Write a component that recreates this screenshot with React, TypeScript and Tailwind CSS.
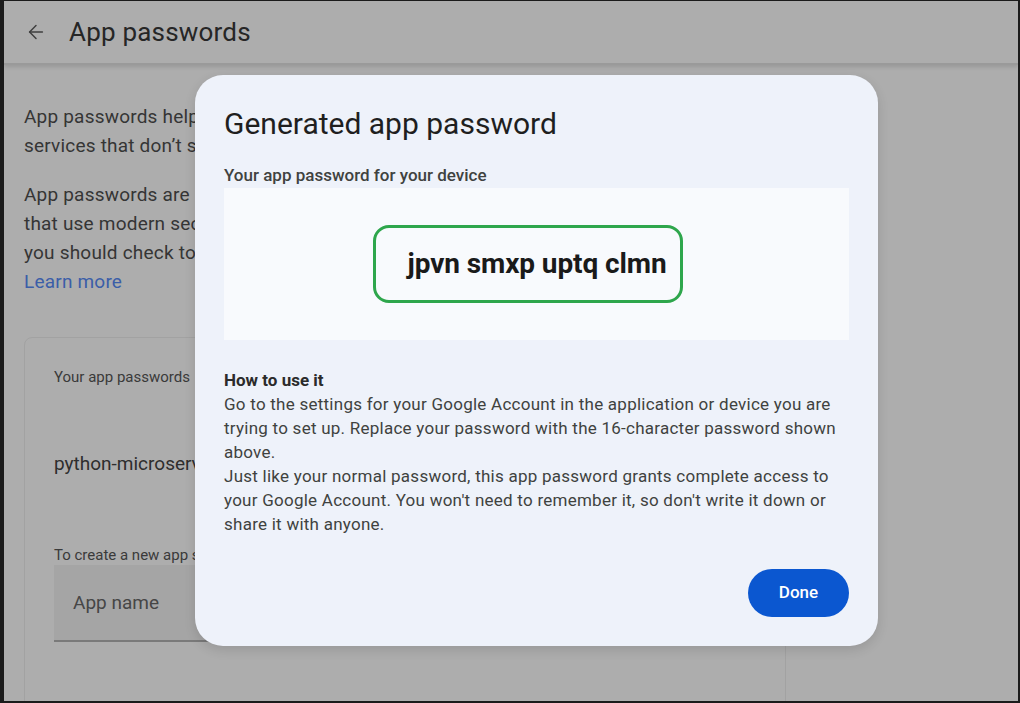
import { ArrowLeft } from "lucide-react";

const font = { fontFamily: "Roboto, 'Noto Sans', Arial, sans-serif" };

export default function App() {
  return (
    <div className="h-[703px] w-[1020px] bg-[#1b1b1b] pb-[2px] pl-[4px] pr-[2px] pt-[1px]" style={font}>
      <div className="relative h-full w-full overflow-hidden bg-[#adadad]">
        {/* header */}
        <header className="flex h-[64px] items-center gap-[22px] border-b-2 border-[#9a9a9a] pl-[21px] shadow-[0_2px_4px_rgba(0,0,0,0.12)]">
          <ArrowLeft size={22} strokeWidth={1.6} className="text-[#3f3f3f]" />
          <h1 className="text-[26px] tracking-[0.2px] text-[#262626]">App passwords</h1>
        </header>

        {/* page behind the scrim */}
        <main className="w-[782px] px-[20px] pt-[37px] text-[19px] leading-[29px] tracking-[0.2px] text-[#353535]">
          <p>
            App passwords help you sign in to your Google Account on older apps and
            <br />
            services that don’t support modern security standards.
          </p>
          <p className="mt-[20px]">
            App passwords are less secure than using up-to-date apps and services
            <br />
            that use modern security standards. Before you create an app password,
            <br />
            you should check to see if your app needs this in order to sign in.
          </p>
          <a className="text-[#3b5ea8]">Learn more</a>

          <section className="mt-[41px] h-[400px] w-[762px] rounded-t-[8px] border border-[#a2a2a2] px-[29px] pt-[29px] tracking-normal">
            <p className="text-[15px] leading-[20px] text-[#3a3a3a]">Your app passwords</p>
            <p className="mt-[63px] text-[19px] leading-[28px] text-[#2e2e2e]">python-microservice</p>
            <p className="mt-[67px] text-[15px] leading-[20px] text-[#3a3a3a]">To create a new app specific password, type a name for it below...</p>
            <div className="mt-[0px] flex h-[77px] w-[400px] items-center border-b-2 border-[#7a7a7a] bg-[#a5a5a5] px-[19px] text-[19px] text-[#464646]">
              App name
            </div>
          </section>
        </main>

        {/* dialog */}
        <div className="absolute left-[191px] top-[74px] flex h-[571px] w-[683px] flex-col rounded-[28px] bg-[#eef2fa] px-[29px] pt-[31px] shadow-[0_4px_12px_rgba(0,0,0,0.12)]">
          <h2 className="text-[30px] leading-[36px] text-[#1f1f1f]">Generated app password</h2>
          <p className="mt-[21px] text-[17px] font-medium leading-[24px] text-[#3f4240]">Your app password for your device</p>
          <div className="mt-[1px] flex h-[152px] w-full items-center justify-center bg-[#f8fafd] pr-[18px]">
            <div className="flex h-[78px] w-[310px] items-center rounded-[16px] border-[3px] border-[#2ea64c] pl-[32px]">
              <span className="text-[28px] font-bold tracking-[-0.1px] text-[#1a1a1a]">jpvn smxp uptq clmn</span>
            </div>
          </div>
          <p className="mt-[28px] text-[17px] font-bold leading-[24px] text-[#2b2b2b]">How to use it</p>
          <div className="text-[17px] leading-[24px] tracking-[0.25px] text-[#3f4240]">
            <p>Go to the settings for your Google Account in the application or device you are trying to set up. Replace your password with the 16-character password shown above.</p>
            <p>Just like your normal password, this app password grants complete access to your Google Account. You won't need to remember it, so don't write it down or share it with anyone.</p>
          </div>
          <div className="mt-[33px] flex justify-end">
            <button className="h-[48px] w-[101px] rounded-full bg-[#0b57d0] text-[17px] font-medium text-white">Done</button>
          </div>
        </div>
      </div>
    </div>
  );
}
